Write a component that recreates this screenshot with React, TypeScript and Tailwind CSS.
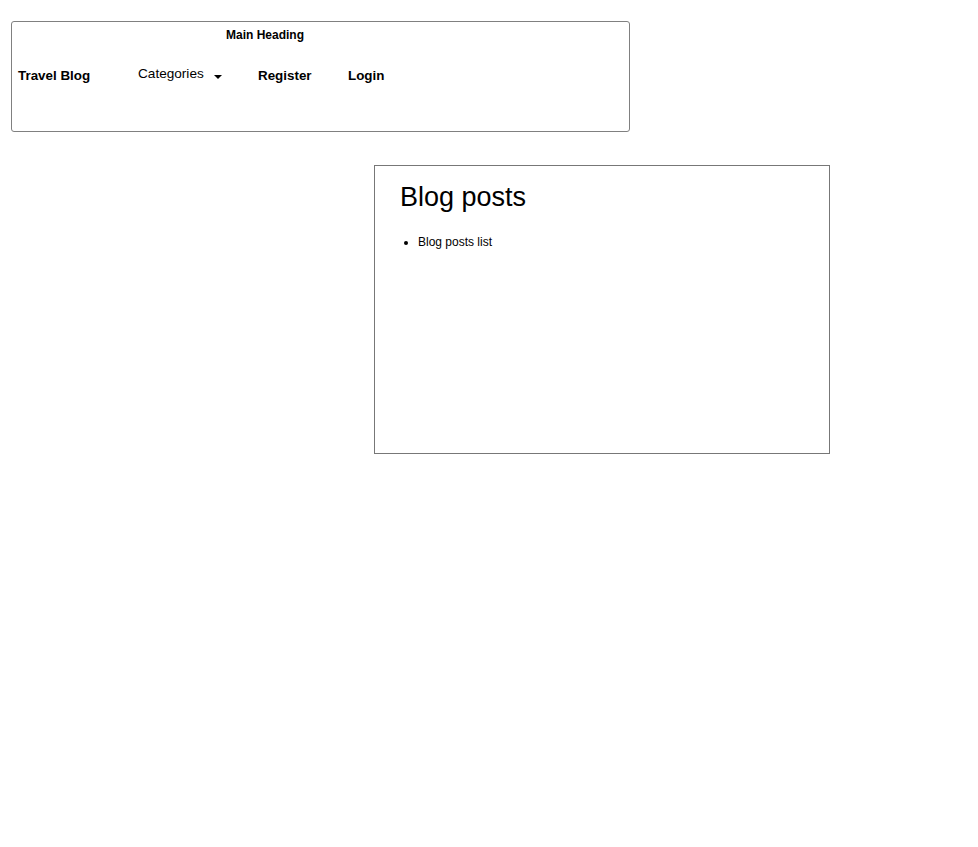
export default function App() {
  return (
    <div className="min-h-screen bg-white text-black font-['Liberation_Sans',Arial,sans-serif]">
      <header className="ml-[11px] mt-[21px] h-[111px] w-[619px] rounded-[3px] border border-[#808080]">
        <div className="pt-[6px] pl-[214px] text-[12px] font-bold leading-[14px]">
          Main Heading
        </div>
        <nav className="mt-[26px] flex items-center pl-[6px] text-[13.4px] leading-[16px]">
          <span className="w-[120px] font-bold">Travel Blog</span>
          <span className="flex w-[120px] items-center -mt-[4px] text-[13.6px]">
            Categories
            <span className="ml-[10px] mt-[5px] h-0 w-0 border-x-[4px] border-t-[4px] border-x-transparent border-t-black" />
          </span>
          <span className="w-[90px] font-bold">Register</span>
          <span className="font-bold">Login</span>
        </nav>
      </header>

      <main className="ml-[374px] mt-[33px] h-[289px] w-[456px] border border-[#777]">
        <h1 className="pl-[25px] pt-[15px] text-[27px] leading-[32px]">Blog posts</h1>
        <ul className="mt-[22px] list-disc pl-[43px] text-[12px] leading-[14px]">
          <li>Blog posts list</li>
        </ul>
      </main>
    </div>
  );
}
